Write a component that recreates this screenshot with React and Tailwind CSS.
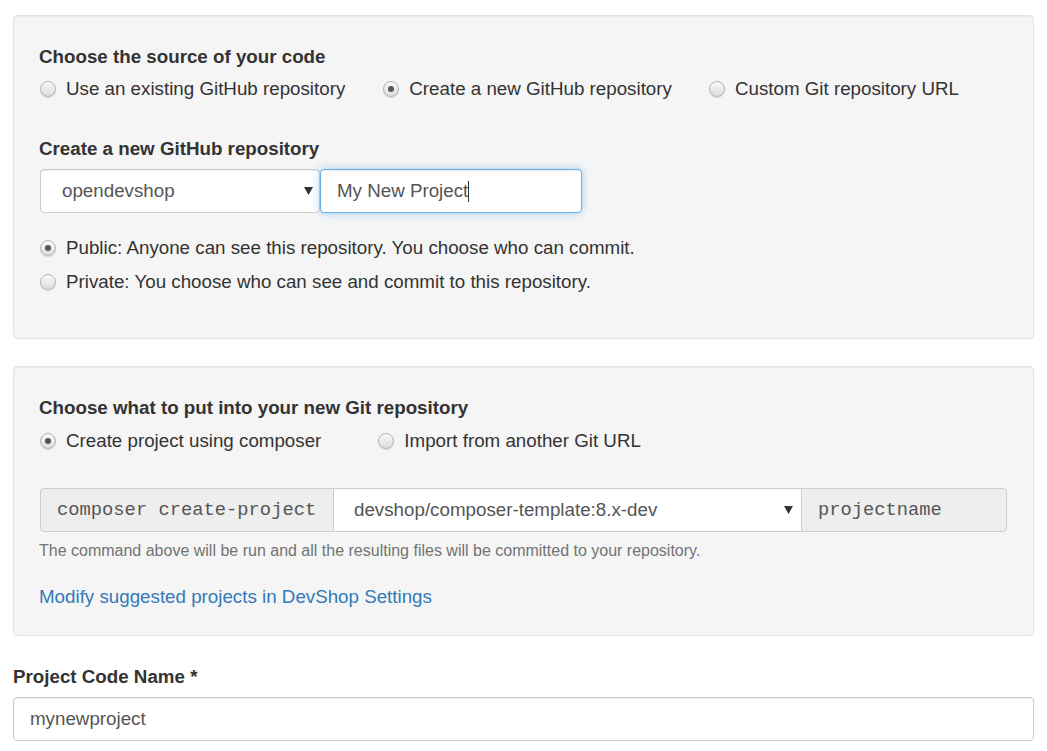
import React from 'react';

const SANS = { fontFamily: '"Liberation Sans", Arial, sans-serif' };
const MONO = { fontFamily: '"Liberation Mono", "Courier New", monospace' };

function Radio({ checked }) {
  return (
    <span className="relative inline-block ml-[1px] w-[16px] h-[16px] shrink-0 rounded-full border border-[#b3b3b3] bg-gradient-to-b from-[#fafafa] to-[#dcdcdc] shadow-[0_1px_1px_rgba(0,0,0,0.12)]">
      {checked && (
        <span className="absolute left-[4px] top-[4px] w-[6px] h-[6px] rounded-full bg-[#555]" />
      )}
    </span>
  );
}

function RadioOption({ checked, label, className = '' }) {
  return (
    <label className={`flex items-center gap-[10px] h-[26px] text-[18.75px] text-[#333] ${className}`}>
      <Radio checked={checked} />
      <span>{label}</span>
    </label>
  );
}

function Caret() {
  return (
    <svg width="9" height="8" viewBox="0 0 9 8" className="shrink-0">
      <path d="M0 0 H9 L4.5 8 Z" fill="#333" />
    </svg>
  );
}

function Panel({ children, className = '' }) {
  return (
    <div className={`rounded-[4px] border border-[#e3e3e3] bg-[#f5f5f5] shadow-[inset_0_1px_1px_rgba(0,0,0,0.05)] pl-[25px] pr-[26px] ${className}`}>
      {children}
    </div>
  );
}

export default function App() {
  return (
    <div className="bg-white min-h-[751px] px-[13px] pt-[15px]" style={SANS}>
      <Panel className="pt-[28px] pb-[43px]">
        <h3 className="h-[26px] leading-[26px] text-[18.75px] font-bold text-[#333]">Choose the source of your code</h3>
        <div className="flex items-center mt-[6px]">
          <RadioOption label="Use an existing GitHub repository" />
          <RadioOption checked label="Create a new GitHub repository" className="ml-[37px]" />
          <RadioOption label="Custom Git repository URL" className="ml-[36px]" />
        </div>

        <h3 className="mt-[34px] h-[26px] leading-[26px] text-[18.75px] font-bold text-[#333]">Create a new GitHub repository</h3>
        <div className="flex mt-[7px] ml-[1px]">
          <div className="flex items-center justify-between w-[280px] h-[44px] pl-[21px] pr-[6px] bg-white border border-[#ccc] rounded-[4px] shadow-[inset_0_1px_1px_rgba(0,0,0,0.075)] text-[18.75px] text-[#555]">
            <span>opendevshop</span>
            <Caret />
          </div>
          <div className="flex items-center w-[262px] h-[44px] pl-[16px] bg-white border border-[#66afe9] rounded-[4px] shadow-[inset_0_1px_1px_rgba(0,0,0,0.075),0_0_8px_rgba(102,175,233,0.6)] text-[18.75px] text-[#555]">
            <span>My New Project</span>
            <span className="w-px h-[21px] bg-[#333]" />
          </div>
        </div>

        <div className="flex flex-col gap-[8px] mt-[22px]">
          <RadioOption checked label="Public: Anyone can see this repository. You choose who can commit." />
          <RadioOption label="Private: You choose who can see and commit to this repository." />
        </div>
      </Panel>

      <Panel className="mt-[27px] pt-[28px] pb-[25px]">
        <h3 className="h-[26px] leading-[26px] text-[18.75px] font-bold text-[#333]">Choose what to put into your new Git repository</h3>
        <div className="flex items-center mt-[7px]">
          <RadioOption checked label="Create project using composer" />
          <RadioOption label="Import from another Git URL" className="ml-[56px]" />
        </div>

        <div className="flex mt-[34px] ml-[1px] h-[44px]">
          <div className="flex items-center w-[294px] pl-[16px] bg-[#eee] border border-[#ccc] rounded-l-[4px] text-[18.8px] text-[#555]" style={MONO}>
            composer create-project
          </div>
          <div className="flex items-center justify-between w-[467px] pl-[20px] pr-[8px] bg-white border-y border-[#ccc] text-[18.75px] text-[#555]">
            <span>devshop/composer-template:8.x-dev</span>
            <Caret />
          </div>
          <div className="flex items-center flex-1 pl-[16px] bg-[#eee] border border-[#ccc] rounded-r-[4px] text-[18.75px] text-[#555]" style={MONO}>
            projectname
          </div>
        </div>
        <p className="mt-[8px] h-[22px] leading-[22px] text-[16px] text-[#737373]">
          The command above will be run and all the resulting files will be committed to your repository.
        </p>
        <a href="#" className="block mt-[22px] h-[26px] leading-[26px] text-[18.75px] text-[#337ab7]">
          Modify suggested projects in DevShop Settings
        </a>
      </Panel>

      <label className="block mt-[28px] h-[26px] leading-[26px] text-[18.75px] font-bold text-[#333]">Project Code Name *</label>
      <div className="flex items-center mt-[7px] h-[44px] pl-[16px] bg-white border border-[#ccc] rounded-[4px] shadow-[inset_0_1px_1px_rgba(0,0,0,0.075)] text-[18.75px] text-[#555]">
        mynewproject
      </div>
    </div>
  );
}
